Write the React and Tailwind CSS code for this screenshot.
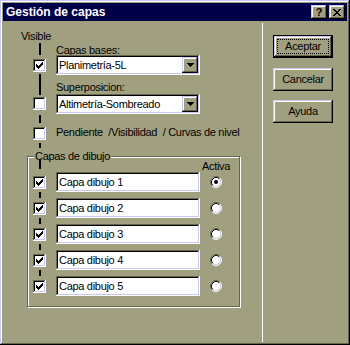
import React from "react";

// Win95-style dialog, olive face colour scheme
const sunken =
  "shadow-[inset_-1px_-1px_0_#ffffff,inset_1px_1px_0_#65654d,inset_-2px_-2px_0_#c8c8f8,inset_2px_2px_0_#000000]";
const raised =
  "shadow-[inset_-1px_-1px_0_#000000,inset_1px_1px_0_#c8c8f8,inset_-2px_-2px_0_#65654d,inset_2px_2px_0_#ffffff]";

const Seg = ({ className = "" }) => (
  <div className={`relative ml-[6px] w-[2px] bg-black ${className}`} />
);

const Check = ({ checked, className = "" }) => (
  <div
    className={`w-[13px] h-[13px] bg-white flex items-center justify-center shrink-0 ${sunken} ${className}`}
  >
    {checked && (
      <svg width="7" height="7" viewBox="0 0 7 7" shapeRendering="crispEdges">
        <path
          d="M6 0h1v1h-1z M5 1h2v1h-2z M0 2h1v1h-1z M4 2h3v1h-3z M0 3h2v1h-2z M3 3h3v1h-3z M0 4h5v1h-5z M1 5h3v1h-3z M2 6h1v1h-1z"
          fill="#000"
        />
      </svg>
    )}
  </div>
);

const Radio = ({ on }) => (
  <svg width="12" height="12" viewBox="0 0 12 12">
    <circle cx="6" cy="6" r="5" fill="#fff" />
    <path d="M2.11 9.89A5.5 5.5 0 0 1 9.89 2.11" stroke="#65654d" fill="none" />
    <path d="M9.89 2.11A5.5 5.5 0 0 1 2.11 9.89" stroke="#ffffff" fill="none" />
    <path d="M2.82 9.18A4.5 4.5 0 0 1 9.18 2.82" stroke="#000" fill="none" />
    <path d="M9.18 2.82A4.5 4.5 0 0 1 2.82 9.18" stroke="#c8c8f8" fill="none" />
    {on && <circle cx="6" cy="6" r="2" fill="#000" />}
  </svg>
);

const Combo = ({ value, className = "" }) => (
  <div className={`w-[144px] h-[20px] bg-white flex items-center p-[2px] ${sunken} ${className}`}>
    <span className="flex-1 pl-[1px] leading-[13px] whitespace-nowrap">{value}</span>
    <div className={`w-[16px] h-[16px] bg-[#a0a080] flex items-center justify-center ${raised}`}>
      <svg width="7" height="4" viewBox="0 0 7 4" shapeRendering="crispEdges">
        <path d="M0 0h7v1H0z M1 1h5v1H1z M2 2h3v1H2z M3 3h1v1H3z" fill="#000" />
      </svg>
    </div>
  </div>
);

const Button = ({ label, isDefault, className = "" }) =>
  isDefault ? (
    <div
      className={`w-[60px] h-[23px] border border-black p-[3px] flex ${raised} ${className}`}
    >
      <div className="flex-1 border border-dotted border-black flex items-center justify-center leading-[13px]">
        {label}
      </div>
    </div>
  ) : (
    <div
      className={`w-[60px] h-[23px] flex items-center justify-center leading-[13px] ${raised} ${className}`}
    >
      {label}
    </div>
  );

const layers = ["Capa dibujo 1", "Capa dibujo 2", "Capa dibujo 3", "Capa dibujo 4", "Capa dibujo 5"];

export default function App() {
  return (
    <div
      className={`w-[350px] h-[345px] bg-[#a0a080] p-[3px] flex flex-col font-['Liberation_Sans',Arial,sans-serif] text-[11px] tracking-[-0.3px] text-black ${raised}`}
    >
      {/* title bar */}
      <div className="h-[18px] shrink-0 bg-[#000048] flex items-center pl-[3px] pr-[2px]">
        <span className="text-white font-bold text-[12px] tracking-normal leading-none">
          Gestión de capas
        </span>
        <div className="ml-auto flex gap-[2px]">
          <div
            className={`w-[16px] h-[14px] bg-[#a0a080] flex items-center justify-center font-bold text-[11px] leading-none ${raised}`}
          >
            ?
          </div>
          <div className={`w-[16px] h-[14px] bg-[#a0a080] flex items-center justify-center ${raised}`}>
            <svg width="8" height="7" viewBox="0 0 8 7" shapeRendering="crispEdges">
              <path
                d="M0 0h2v1H0z M6 0h2v1H6z M1 1h2v1H1z M5 1h2v1H5z M2 2h4v1H2z M3 3h2v1H3z M2 4h4v1H2z M1 5h2v1H1z M5 5h2v1H5z M0 6h2v1H0z M6 6h2v1H6z"
                fill="#000"
              />
            </svg>
          </div>
        </div>
      </div>

      <div className="flex flex-1">
        {/* left panel */}
        <div className="w-[259px] flex flex-col">
          <div className="mt-[9px] ml-[18px] h-[13px] leading-[13px]">Visible</div>

          <div className="flex ml-[30px]">
            <div className="w-[13px] flex flex-col">
              <Seg className="h-[12px]" />
              <Check checked className="mt-[4px]" />
              <Seg className="mt-[2px] h-[21px]" />
              <Check className="mt-[2px]" />
              <Seg className="mt-[5px] h-[8px]" />
              <Check className="mt-[4px]" />
              <Seg className="mt-[3px] h-[5px]" />
            </div>
            <div className="ml-[10px] flex flex-col">
              <div className="mt-[3px] h-[9px] leading-[9px]">Capas bases:</div>
              <Combo value="Planimetría-5L" />
              <div className="mt-[8px] h-[9px] leading-[9px]">Superposicion:</div>
              <Combo value="Altimetría-Sombreado" className="mt-[2px]" />
              <div className="mt-[12px] h-[13px] leading-[13px] whitespace-pre">
                {"Pendiente  /Visibilidad  / Curvas de nivel"}
              </div>
            </div>
          </div>

          {/* group box */}
          <div className="relative mt-[8px] ml-[24px] w-[213px] h-[151px] border border-[#65654d] shadow-[inset_1px_1px_0_#ffffff,1px_1px_0_#ffffff]">
            <div className="absolute left-[6px] top-[-5px] px-[1px] h-[9px] leading-[9px] bg-[#a0a080]">
              Capas de dibujo
            </div>
            <div className="flex h-[15px] pl-[5px]">
              <div className="w-[13px]">
                <Seg className="mt-[2px] h-[10px]" />
              </div>
              <div className="ml-[164px] w-[12px] flex justify-center">
                <span className="mt-[3px] h-[13px] leading-[13px] whitespace-nowrap">Activa</span>
              </div>
            </div>
            {layers.map((name, i) => (
              <React.Fragment key={name}>
                {i > 0 && (
                  <div className="flex h-[6px] pl-[5px]">
                    <div className="w-[13px]">
                      <Seg className="h-[6px]" />
                    </div>
                  </div>
                )}
                <div className="flex h-[20px] pl-[5px]">
                  <div className="w-[13px]">
                    <Check checked className="mt-[4px]" />
                  </div>
                  <div
                    className={`ml-[10px] w-[144px] h-[20px] bg-white flex items-center pl-[3px] ${sunken}`}
                  >
                    <span className="leading-[13px] whitespace-nowrap">{name}</span>
                  </div>
                  <div className="ml-[10px] w-[12px] flex items-center">
                    <Radio on={i === 0} />
                  </div>
                </div>
              </React.Fragment>
            ))}
          </div>
        </div>

        <div className="w-px bg-white mt-[2px]" />

        {/* right panel */}
        <div className="flex-1 flex flex-col pl-[10px]">
          <Button label="Aceptar" isDefault className="mt-[14px]" />
          <Button label="Cancelar" className="mt-[10px]" />
          <Button label="Ayuda" className="mt-[9px]" />
        </div>
      </div>
    </div>
  );
}
